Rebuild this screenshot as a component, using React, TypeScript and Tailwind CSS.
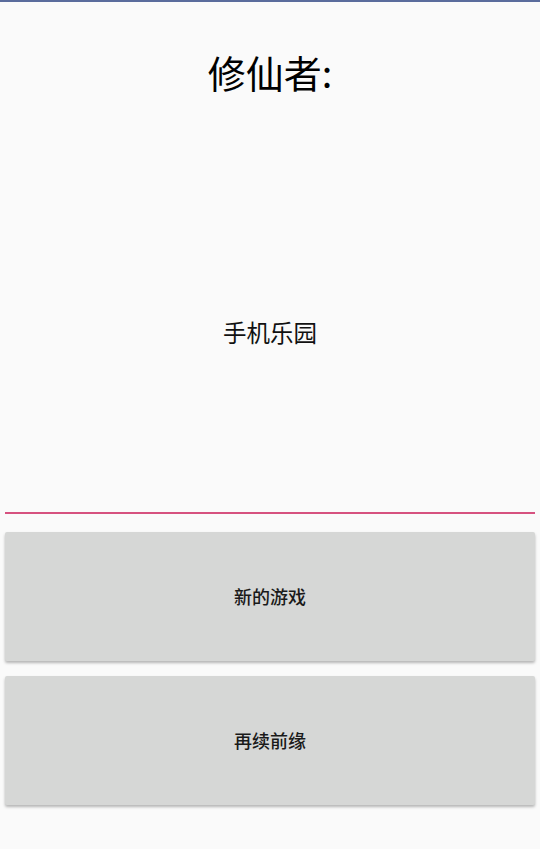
const cjk = { fontFamily: '"Noto Sans CJK SC", "Noto Sans", sans-serif' };

function MenuButton({ label }: { label: string }) {
  return (
    <button
      type="button"
      className="mx-[5px] flex h-[129px] items-center justify-center rounded-[2px] bg-[#d6d7d6] text-[18px] font-medium text-[#1a1a1a] shadow-[0_2px_3px_rgba(0,0,0,0.28)]"
      style={cjk}
    >
      {label}
    </button>
  );
}

export default function App() {
  return (
    <div className="flex h-[849px] w-full flex-col border-t-2 border-[#5a6c9c] bg-[#fafafa]" style={cjk}>
      <div className="flex h-[140px] items-center justify-center">
        <h1 className="text-[38px] leading-none text-black">修仙者:</h1>
      </div>
      <div className="flex h-[370px] items-center justify-center pt-3">
        <p className="text-[23.5px] text-[#111]">手机乐园</p>
      </div>
      <div className="mx-[5px] h-[2px] bg-[#d6517f]" />
      <div className="mt-[18px] flex flex-col gap-[15px]">
        <MenuButton label="新的游戏" />
        <MenuButton label="再续前缘" />
      </div>
    </div>
  );
}
